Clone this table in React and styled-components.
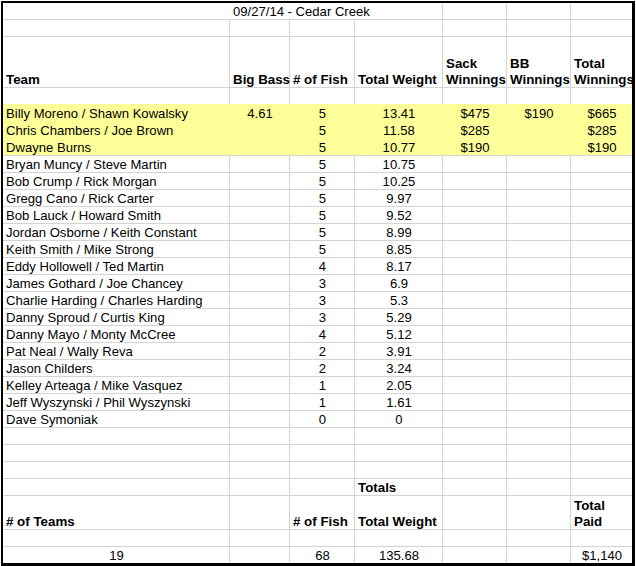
import React from 'react';
import styled, { createGlobalStyle } from 'styled-components';

const GRID = '#d4d4d4';
const FILL = '#ffff99';

const GlobalStyle = createGlobalStyle`
    body {
        margin: 0;
        background: #ffffff;
        font-family: "Liberation Sans", Arial, sans-serif;
        color: #000000;
    }
`;

const HEIGHTS = {
    normal: 17,
    header: 51,
    double: 34,
    final: 16
};

const rightLine = p => {
    if (p.$last) return 'none';
    if (p.$open) return '1px solid transparent';
    return `1px solid ${p.$fill ? FILL : GRID}`;
};

const Sheet = styled.div`
    display: grid;
    grid-template-columns: 227px 60px 65px 88px 64px 64px 61px;
    width: max-content;
    margin: 1px 0 0 1px;
    border-style: solid;
    border-color: #000000;
    border-width: 2px 3px 3px 2px;
`;

const Cell = styled.div`
    box-sizing: border-box;
    display: flex;
    align-items: flex-end;
    justify-content: ${p => (p.$center ? 'center' : 'flex-start')};
    height: ${p => HEIGHTS[p.$kind || 'normal']}px;
    padding: 0 2px 0 3px;
    background: ${p => (p.$fill ? FILL : 'transparent')};
    border-right: ${rightLine};
    border-bottom: ${p =>
        p.$kind === 'final' ? 'none' : `1px solid ${p.$fillBottom ? FILL : GRID}`};
    grid-column: ${p => (p.$span ? `span ${p.$span}` : 'auto')};
    font-size: ${p => (p.$bold ? '13.33px' : '13.1px')};
    font-weight: ${p => (p.$bold ? 700 : 400)};
    white-space: nowrap;
`;

const Text = styled.span`
    display: block;
    line-height: 16px;
    margin-bottom: -1px;
`;

const teams = [
    ['Billy Moreno / Shawn Kowalsky', '4.61', 5, '13.41', '$475', '$190', '$665'],
    ['Chris Chambers / Joe Brown', '', 5, '11.58', '$285', '', '$285'],
    ['Dwayne Burns', '', 5, '10.77', '$190', '', '$190'],
    ['Bryan Muncy / Steve Martin', '', 5, '10.75'],
    ['Bob Crump / Rick Morgan', '', 5, '10.25'],
    ['Gregg Cano / Rick Carter', '', 5, '9.97'],
    ['Bob Lauck / Howard Smith', '', 5, '9.52'],
    ['Jordan Osborne / Keith Constant', '', 5, '8.99'],
    ['Keith Smith / Mike Strong', '', 5, '8.85'],
    ['Eddy Hollowell / Ted Martin', '', 4, '8.17'],
    ['James Gothard / Joe Chancey', '', 3, '6.9'],
    ['Charlie Harding / Charles Harding', '', 3, '5.3'],
    ['Danny Sproud / Curtis King', '', 3, '5.29'],
    ['Danny Mayo / Monty McCree', '', 4, '5.12'],
    ['Pat Neal / Wally Reva', '', 2, '3.91'],
    ['Jason Childers', '', 2, '3.24'],
    ['Kelley Arteaga / Mike Vasquez', '', 1, '2.05'],
    ['Jeff Wyszynski / Phil Wyszynski', '', 1, '1.61'],
    ['Dave Symoniak', '', 0, '0']
];

const headers = [
    'Team',
    'Big Bass',
    '# of Fish',
    'Total Weight',
    ['Sack', 'Winnings'],
    ['BB', 'Winnings'],
    ['Total', 'Winnings']
];

const renderText = value =>
    Array.isArray(value) ? (
        <Text>
            {value[0]}
            <br />
            {value[1]}
        </Text>
    ) : (
        <Text>{value}</Text>
    );

// one spreadsheet row = seven cells dropped into the sheet grid
const Row = ({ values = [], kind, bold, centered = [], fill, fillBottom, prefix }) =>
    [0, 1, 2, 3, 4, 5, 6].map(i => (
        <Cell
            key={`${prefix}_${i}`}
            $kind={kind}
            $bold={bold}
            $center={centered.includes(i)}
            $fill={fill}
            $fillBottom={fillBottom}
            $last={i === 6}
        >
            {values[i] !== undefined && values[i] !== '' ? renderText(values[i]) : null}
        </Cell>
    ));

const App = () => {
    return (
        <>
            <GlobalStyle />
            <Sheet>
                <Cell $open />
                <Cell $span={3}>
                    <Text>09/27/14 - Cedar Creek</Text>
                </Cell>
                <Cell />
                <Cell />
                <Cell $last />

                <Row prefix="blank_top" />
                <Row prefix="head" kind="header" bold values={headers} />
                <Row prefix="blank_head" fillBottom />

                {teams.map((team, index) => (
                    <Row
                        key={team[0]}
                        prefix={`team_${index}`}
                        values={team}
                        centered={[1, 2, 3, 4, 5, 6]}
                        fill={index < 3}
                        fillBottom={index < 2}
                    />
                ))}

                <Row prefix="gap_1" />
                <Row prefix="gap_2" />
                <Row prefix="gap_3" />
                <Row prefix="totals_label" bold values={['', '', '', 'Totals']} />
                <Row
                    prefix="totals_head"
                    kind="double"
                    bold
                    values={['# of Teams', '', '# of Fish', 'Total Weight', '', '', ['Total', 'Paid']]}
                />
                <Row prefix="totals_gap" />
                <Row
                    prefix="totals_values"
                    kind="final"
                    values={['19', '', '68', '135.68', '', '', '$1,140']}
                    centered={[0, 2, 3, 6]}
                />
            </Sheet>
        </>
    );
};

export default App;
